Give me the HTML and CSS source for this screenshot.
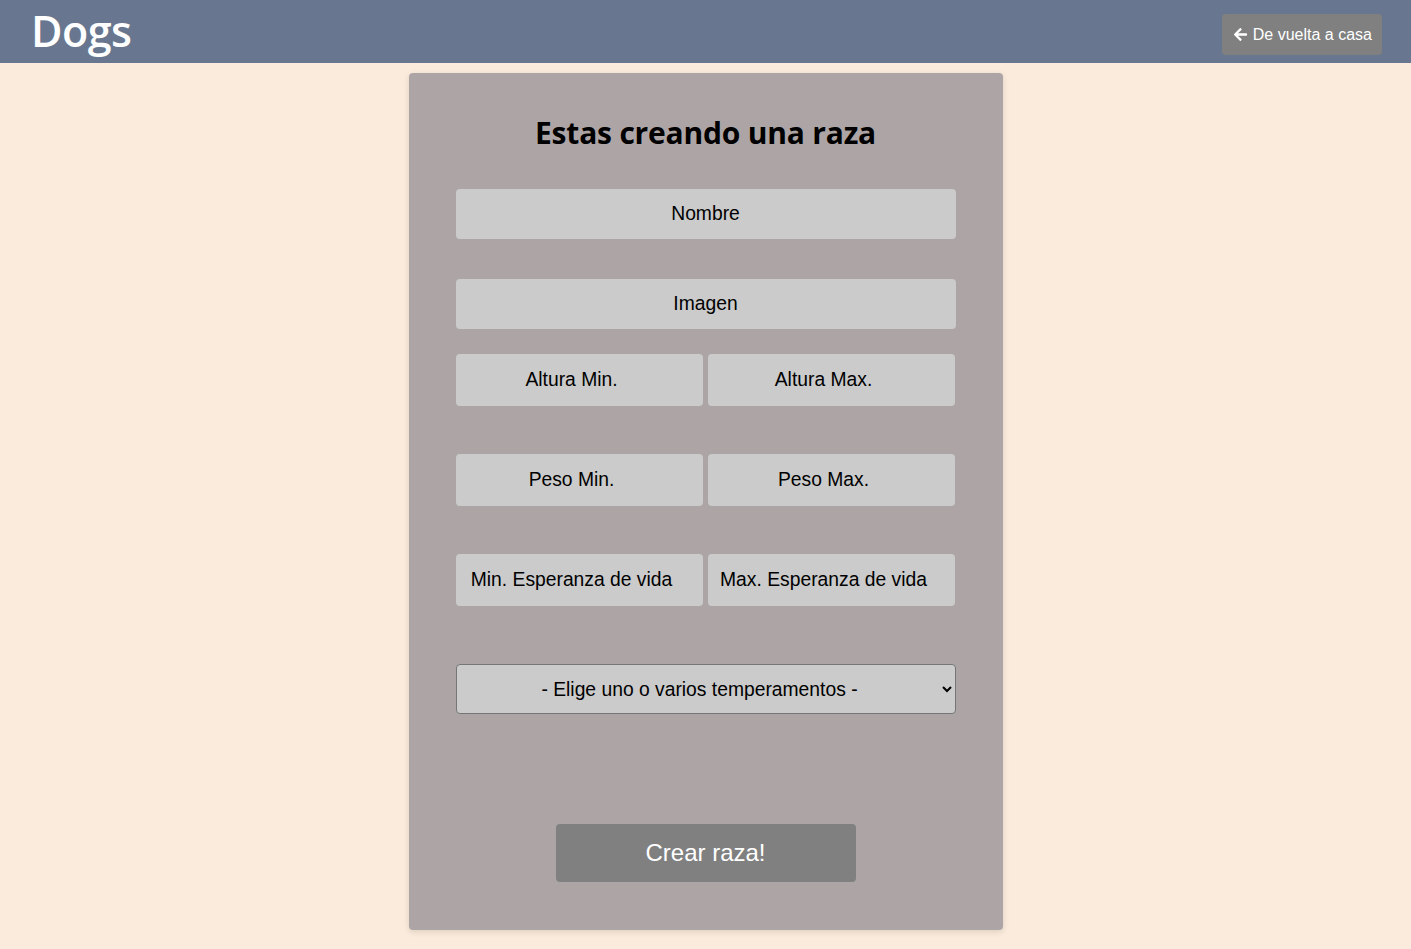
FILE: index.html
```html
<!DOCTYPE html>
<html lang="es">
<head>
<meta charset="utf-8">
<title>Dogs</title>
<link rel="stylesheet" href="styles.css">
</head>
<body>
<header class="topbar">
  <h1 class="brand">Dogs</h1>
  <button class="back-btn" type="button">
    <svg class="back-icon" viewBox="0 0 448 512" width="15" height="15" aria-hidden="true"><path fill="currentColor" d="M257.5 445.1l-22.2 22.2c-9.4 9.4-24.6 9.4-33.9 0L7 273c-9.4-9.4-9.4-24.6 0-33.9L201.4 44.7c9.4-9.4 24.6-9.4 33.9 0l22.2 22.2c9.5 9.5 9.300 25-.4 34.300L136.6 216H424c13.3 0 24 10.7 24 24v32c0 13.3-10.7 24-24 24H136.6l120.5 114.8c9.8 9.3 10 24.8.4 34.3z"/></svg>
    <span>De vuelta a casa</span>
  </button>
</header>
<main class="page">
  <form class="card">
    <h2 class="card-title">Estas creando una raza</h2>
    <input class="field field-full f-nombre" type="text" placeholder="Nombre">
    <input class="field field-full f-imagen" type="text" placeholder="Imagen">
    <div class="pair pair-altura">
      <input class="field field-half" type="text" placeholder="Altura Min.">
      <input class="field field-half" type="text" placeholder="Altura Max.">
    </div>
    <div class="pair pair-peso">
      <input class="field field-half" type="text" placeholder="Peso Min.">
      <input class="field field-half" type="text" placeholder="Peso Max.">
    </div>
    <div class="pair pair-vida">
      <input class="field field-half" type="text" placeholder="Min. Esperanza de vida">
      <input class="field field-half" type="text" placeholder="Max. Esperanza de vida">
    </div>
    <select class="temper">
      <option>- Elige uno o varios temperamentos -</option>
    </select>
    <button class="submit" type="button">Crear raza!</button>
  </form>
</main>
</body>
</html>
```

FILE: styles.css
```css
* { box-sizing: border-box; }
html, body { margin: 0; padding: 0; }
body {
  background: #fbebdc;
  font-family: "Liberation Sans", Arial, sans-serif;
  min-height: 949px;
}
.topbar {
  height: 63px;
  background: #68778f;
  display: flex;
  align-items: center;
  justify-content: space-between;
  padding: 0 29px 0 31px;
}
.brand {
  margin: 0;
  font-family: "Open Sans", "Noto Sans", sans-serif;
  font-weight: 600;
  font-size: 43px;
  color: #fff;
  line-height: 1;
  position: relative;
  top: -1px;
  letter-spacing: -0.5px;
}
.back-btn {
  display: flex;
  align-items: center;
  gap: 5px;
  height: 41px;
  padding: 0 10px 0 11px;
  background: #808080;
  color: #fff;
  border: none;
  border-radius: 4px;
  font-family: "Liberation Sans", Arial, sans-serif;
  font-size: 16px;
  position: relative;
  top: 3px;
}
.back-icon { display: block; }
.page {
  display: flex;
  justify-content: center;
  padding-top: 10px;
}
.card {
  width: 594px;
  height: 857px;
  background: #ada5a5;
  border-radius: 4px;
  box-shadow: 0 2px 6px rgba(0,0,0,0.12);
  display: flex;
  flex-direction: column;
  align-items: center;
  padding-top: 40px;
}
.card-title {
  margin: 0;
  font-family: "Open Sans", "Noto Sans", sans-serif;
  font-weight: 700;
  font-size: 30px;
  line-height: 40px;
  color: #000;
  letter-spacing: -0.2px;
}
.field {
  height: 50px;
  background: #cbcbcb;
  border: none;
  border-radius: 4px;
  font-family: "Liberation Sans", Arial, sans-serif;
  font-size: 19.3px;
  color: #000;
  text-align: center;
  padding: 0 16px;
  outline: none;
}
.field::placeholder { color: #000; opacity: 1; }
.field-full { width: 500px; }
.f-nombre { margin-top: 36px; }
.f-imagen { margin-top: 40px; }
.pair {
  width: 500px;
  display: flex;
  gap: 5px;
}
.pair-altura { margin-top: 25px; }
.pair-peso { margin-top: 48px; }
.pair-vida { margin-top: 48px; }
.field-half {
  width: 247px;
  height: 52px;
  padding: 0 15px 0 0;
}
.temper {
  margin-top: 58px;
  width: 500px;
  height: 50px;
  background: #cbcbcb;
  border: 1px solid #767676;
  border-radius: 4px;
  font-family: "Liberation Sans", Arial, sans-serif;
  font-size: 19.3px;
  color: #000;
  text-align: center;
  text-align-last: center;
}
.submit {
  margin-top: 110px;
  width: 300px;
  height: 58px;
  background: #808080;
  border: none;
  border-radius: 4px;
  color: #fff;
  font-family: "Liberation Sans", Arial, sans-serif;
  font-size: 24px;
}
```
